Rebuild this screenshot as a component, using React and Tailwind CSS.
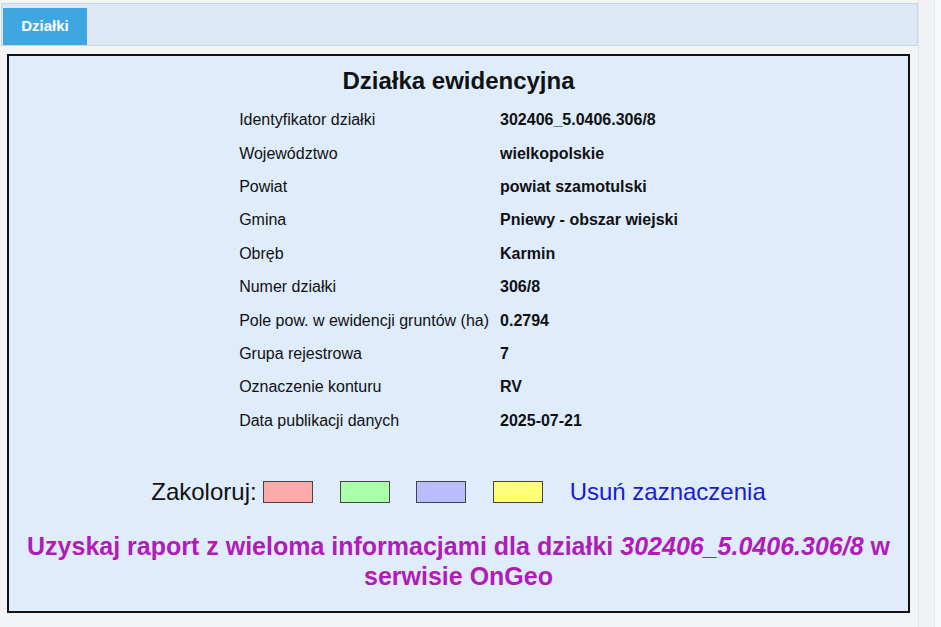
import React from "react";

const rows = [
  ["Identyfikator działki", "302406_5.0406.306/8"],
  ["Województwo", "wielkopolskie"],
  ["Powiat", "powiat szamotulski"],
  ["Gmina", "Pniewy - obszar wiejski"],
  ["Obręb", "Karmin"],
  ["Numer działki", "306/8"],
  ["Pole pow. w ewidencji gruntów (ha)", "0.2794"],
  ["Grupa rejestrowa", "7"],
  ["Oznaczenie konturu", "RV"],
  ["Data publikacji danych", "2025-07-21"],
];

export default function App() {
  return (
    <div
      className="w-[941px] h-[627px] overflow-hidden bg-[#f2f4f6] flex"
      style={{ fontFamily: '"Liberation Sans", Arial, sans-serif' }}
    >
      <div className="w-[919px] flex flex-col pt-[3px] border-r border-[#e3e7eb]">
        <div className="h-[43px] ml-[1px] w-[917px] bg-[#dde9f7] border border-[#c6d6e6] flex items-end pl-[1px]">
          <div className="h-[37px] w-[84px] bg-[#3ea7e2] text-white font-bold text-[15px] flex items-center justify-center">
            Działki
          </div>
        </div>
        <div className="mt-[8px] ml-[7px] w-[903px] h-[559px] border-2 border-[#111] bg-[#deecfc] flex flex-col items-center text-[#111]">
          <div className="mt-[11px] text-[24px] leading-[28px] font-bold">Działka ewidencyjna</div>
          <table className="mt-[8px] border-collapse text-[16px] leading-[19px]">
            <tbody>
              {rows.map(([k, v]) => (
                <tr key={k} className="h-[33.4px]">
                  <td className="pr-[11px] align-middle whitespace-nowrap">{k}</td>
                  <td className="font-bold align-middle whitespace-nowrap">{v}</td>
                </tr>
              ))}
            </tbody>
          </table>
          <div className="mt-[41px] flex items-center text-[24px] leading-[28px]">
            <span className="mr-[6px]">Zakoloruj:</span>
            <span className="w-[50px] h-[22px] bg-[#ffaaaa] border border-[#444]"></span>
            <span className="ml-[27px] w-[50px] h-[22px] bg-[#aaffaa] border border-[#444]"></span>
            <span className="ml-[26px] w-[50px] h-[22px] bg-[#bbbbff] border border-[#444]"></span>
            <span className="ml-[27px] w-[50px] h-[22px] bg-[#ffff77] border border-[#444]"></span>
            <span className="ml-[27px] text-[#1b1bcf]">Usuń zaznaczenia</span>
          </div>
          <div className="mt-[25px] w-[880px] text-center text-[25px] leading-[30px] font-bold text-[#b01cb8]">
            Uzyskaj raport z wieloma informacjami dla działki <i>302406_5.0406.306/8</i> w serwisie OnGeo
          </div>
        </div>
      </div>
      <div className="w-[15px] bg-[#f0f2f4]"></div>
      <div className="flex-1 bg-[#f7f8f9] border-l border-[#e6e9ec]"></div>
    </div>
  );
}
